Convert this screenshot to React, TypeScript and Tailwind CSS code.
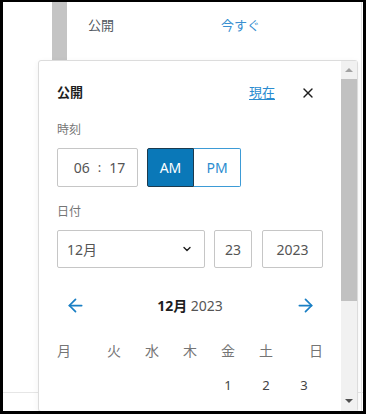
import { ArrowLeft, ArrowRight, ChevronDown, X } from "lucide-react";

const FONT = { fontFamily: '"Noto Sans", "Noto Sans CJK JP", sans-serif' };

const WEEKDAYS = ["月", "火", "水", "木", "金", "土", "日"];

export default function App() {
  return (
    <div className="w-[370px] h-[414px] bg-white" style={FONT}>
      <div className="relative w-[366px] h-[414px] border-l-[3px] border-t-2 border-r-[3px] border-b-[3px] border-black overflow-hidden bg-white">
        {/* ── Sidebar behind ── */}
        <div className="flex h-[58px]">
          <div className="ml-[49px] w-[15px] h-full bg-[#c4c4c4]" />
          <div className="flex items-start pt-[14px] text-[13px] leading-[18px]">
            <span className="ml-[21px] text-[#50575e]">公開</span>
            <span className="ml-[107px] text-[#3a8fd0]">今すぐ</span>
          </div>
        </div>
        <div className="absolute right-[1px] top-0 bottom-0 w-px bg-[#e2e2e2]" />
        <div className="absolute left-0 right-0 top-[390px] h-px bg-[#e6e6e6]" />

        {/* ── Popover ── */}
        <div className="absolute left-[35px] top-[58px] w-[320px] h-[352px] flex bg-white border border-[#dcdcdc] rounded-[3px] shadow-[0_2px_6px_rgba(0,0,0,0.06)]">
          <div className="flex-1 pl-[18px] pr-[18px] pt-[20px]">
            <div className="flex items-center h-[24px]">
              <span className="font-bold text-[13px] text-[#1e1e1e]">公開</span>
              <span className="ml-auto text-[13px] text-[#2b8ccf] underline underline-offset-2">
                現在
              </span>
              <span className="ml-[25px] mr-[7px] text-[#1e1e1e]">
                <X size={16} strokeWidth={2} />
              </span>
            </div>

            <div className="mt-[17px] h-[16px] leading-[16px] text-[12px] text-[#757575]">時刻</div>
            <div className="mt-[10px] flex h-[39px]">
              <div className="w-[81px] h-full border border-[#c6c6c6] rounded-[2px] flex items-center justify-center gap-[8px] text-[14px] text-[#555]">
                <span className="ml-[4px]">06</span>
                <span className="text-[13px]">:</span>
                <span>17</span>
              </div>
              <div className="ml-[9px] flex h-full">
                <div className="w-[47px] h-full bg-[#0a78b8] border border-[#1b3a4e] rounded-l-[2px] text-white text-[14px] flex items-center justify-center">
                  AM
                </div>
                <div className="w-[47px] h-full border border-l-0 border-[#3d9bd6] rounded-r-[2px] text-[#2b8ccf] text-[14px] flex items-center justify-center">
                  PM
                </div>
              </div>
            </div>

            <div className="mt-[17px] h-[16px] leading-[16px] text-[12px] text-[#757575]">日付</div>
            <div className="mt-[10px] flex h-[38px] text-[14px] text-[#555]">
              <div className="w-[148px] h-full border border-[#c6c6c6] rounded-[2px] flex items-center pl-[9px] pr-[11px]">
                <span>12月</span>
                <ChevronDown size={12} strokeWidth={2.8} className="ml-auto text-[#1e1e1e]" />
              </div>
              <div className="ml-[9px] w-[38px] h-full border border-[#c6c6c6] rounded-[2px] flex items-center justify-center">
                23
              </div>
              <div className="ml-[10px] w-[61px] h-full border border-[#c6c6c6] rounded-[2px] flex items-center justify-center">
                2023
              </div>
            </div>

            <div className="mt-[19px] flex items-center h-[36px]">
              <div className="w-[36px] h-full flex items-center justify-center text-[#1a7fc4]">
                <ArrowLeft size={21} strokeWidth={2} />
              </div>
              <div className="flex-1 text-center text-[14px] text-[#555]">
                <span className="font-bold text-[#1e1e1e]">12月</span> 2023
              </div>
              <div className="w-[36px] h-full flex items-center justify-center text-[#1a7fc4]">
                <ArrowRight size={21} strokeWidth={2} />
              </div>
            </div>

            <div className="mt-[20px] grid grid-cols-7 h-[16px] leading-[16px] text-[14px] text-[#757575]">
              {WEEKDAYS.map((d, i) => (
                <span
                  key={d}
                  className={i === 0 ? "text-left" : i === 6 ? "text-right" : "text-center"}
                >
                  {d}
                </span>
              ))}
            </div>

            <div className="mt-[18px] grid grid-cols-7 h-[16px] leading-[16px] text-[13px] text-[#444]">
              <span />
              <span />
              <span />
              <span />
              <span className="text-center">1</span>
              <span className="text-center">2</span>
              <span className="text-center">3</span>
            </div>
          </div>

          {/* Scrollbar */}
          <div className="w-[16px] h-full bg-[#f1f1f1] flex flex-col items-center">
            <div className="h-[18px] flex items-center justify-center">
              <div className="w-0 h-0 border-l-[4px] border-r-[4px] border-b-[4px] border-l-transparent border-r-transparent border-b-[#a3a3a3]" />
            </div>
            <div className="w-[16px] h-[222px] bg-[#c1c1c1]" />
            <div className="flex-1" />
            <div className="h-[14px] flex items-start justify-center pt-[2px]">
              <div className="w-0 h-0 border-l-[4px] border-r-[4px] border-t-[4px] border-l-transparent border-r-transparent border-t-[#505050]" />
            </div>
          </div>
        </div>
      </div>
    </div>
  );
}
